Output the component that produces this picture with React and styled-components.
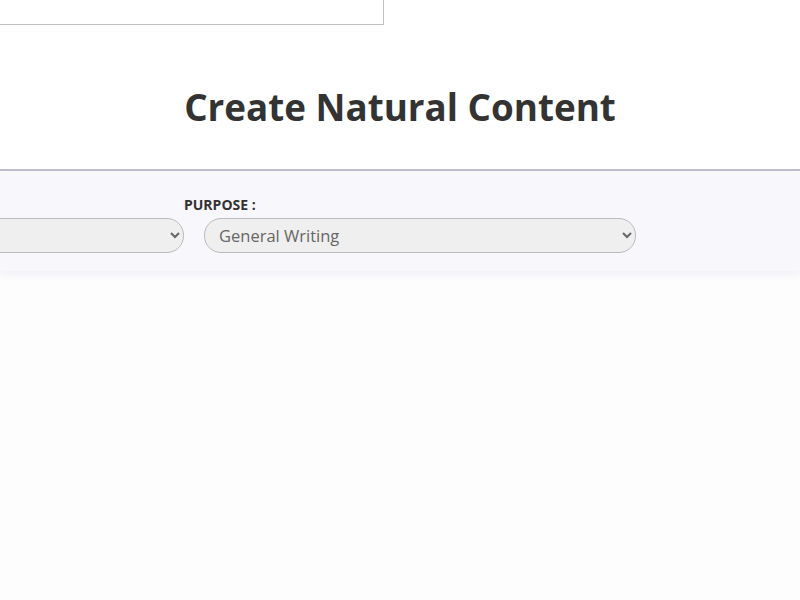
import React from "react";
import styled, { createGlobalStyle } from "styled-components";

const GlobalStyle = createGlobalStyle`
  html, body {
    margin: 0;
    padding: 0;
    background: #fdfdfd;
    overflow: hidden;
  }
  body {
    font-family: "Open Sans", "Noto Sans", sans-serif;
    color: #333;
  }
`;

const Page = styled.div`
  width: 800px;
  min-height: 600px;
`;

const Header = styled.header`
  background: #fff;
  border-bottom: 2px solid #bcb9c9;
  padding-bottom: 38px;
`;

const SearchBox = styled.div`
  width: 420px;
  height: 40px;
  margin: -15px 0 0 -36px;
  background: #fff;
  border: 1px solid #c0c0c0;
  box-sizing: border-box;
`;

const Title = styled.h1`
  margin: 58px 0 0;
  text-align: center;
  font-size: 36.8px;
  font-weight: 700;
  line-height: 48px;
  color: #333;
`;

const Panel = styled.section`
  background: #f7f7fc;
  height: 100px;
  padding-top: 22px;
  box-sizing: border-box;
  box-shadow: 0 4px 6px rgba(240, 240, 248, 0.9);
`;

const FieldRow = styled.div`
  display: flex;
  margin-left: -268px;
`;

const Field = styled.div`
  width: 452px;
  flex: none;
`;

const Label = styled.label`
  display: block;
  min-height: 20px;
  padding-top: 2px;
  font-size: 14px;
  font-weight: 700;
  line-height: 20px;
  color: #333;
  margin-bottom: 3px;
`;

const Select = styled.select`
  display: block;
  margin-left: 20px;
  width: 432px;
  height: 35px;
  padding: 0 10px;
  border: 1px solid #bbb;
  border-radius: 17px;
  background: #efefef;
  color: #666;
  font-family: inherit;
  font-size: 16.5px;
`;

// first field sits mostly off the left edge, so its label is left blank
const fields = [
  { id: "tone", label: "", options: [""] },
  {
    id: "purpose",
    label: "PURPOSE :",
    options: ["General Writing", "Essay", "Article", "Marketing", "Story"],
  },
];

export default function App() {
  return (
    <Page>
      <GlobalStyle />
      <Header>
        <SearchBox />
        <Title>Create Natural Content</Title>
      </Header>
      <Panel>
        <FieldRow>
          {fields.map((f) => (
            <Field key={f.id}>
              <Label>{f.label}</Label>
              <Select defaultValue={f.options[0]}>
                {f.options.map((o) => (
                  <option key={o} value={o}>
                    {o}
                  </option>
                ))}
              </Select>
            </Field>
          ))}
        </FieldRow>
      </Panel>
    </Page>
  );
}
